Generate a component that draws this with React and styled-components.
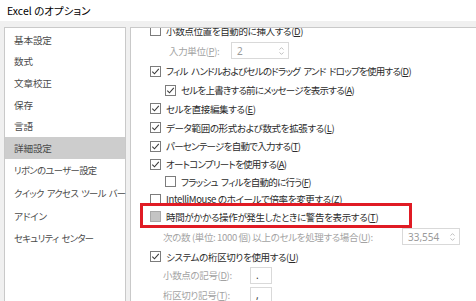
import React from "react";
import styled, { createGlobalStyle } from "styled-components";

const Global = createGlobalStyle`
  html, body { margin: 0; padding: 0; background: #f0f0f0; }
  body { width: 476px; height: 301px; overflow: hidden; font-family: "Noto Sans CJK JP", "Noto Sans", sans-serif; }
`;

const Window = styled.div`
  width: 476px;
  height: 301px;
  display: flex;
  flex-direction: column;
  background: #f0f0f0;
  overflow: hidden;
`;

const TitleBar = styled.div`
  height: 21px;
  flex: none;
  background: #ffffff;
  display: flex;
  align-items: center;
  padding-left: 7px;
  font-size: 10.5px;
  color: #000;
  font-feature-settings: "palt";
`;

const Body = styled.div`
  flex: 1;
  display: flex;
  gap: 4px;
  padding: 6px 0 0 4px;
  min-height: 0;
`;

const Nav = styled.div`
  width: 120px;
  flex: none;
  background: #fff;
  border: 1px solid #c9c9c9;
  border-bottom: none;
  padding-top: 1px;
  display: flex;
  flex-direction: column;
`;

const NavItem = styled.div`
  height: ${(p) => p.$h}px;
  flex: none;
  display: flex;
  align-items: center;
  padding-left: 9px;
  font-size: ${(p) => (p.$tight ? "9.3px" : "9.6px")};
  letter-spacing: ${(p) => (p.$tight ? "-0.6px" : "-0.15px")};
  word-spacing: ${(p) => (p.$tight ? "1.5px" : "0")};
  color: #4a4a4a;
  font-feature-settings: "palt";
  background: ${(p) => (p.$active ? "#cdcdcd" : "transparent")};
  white-space: pre;
`;

const Content = styled.div`
  position: relative;
  flex: 1;
  margin-right: -12px;
  background: #fff;
  border: 1px solid #c9c9c9;
  border-bottom: none;
  overflow: hidden;
`;

const List = styled.div`
  margin-top: -7px;
  display: flex;
  flex-direction: column;
`;

const Row = styled.div`
  height: ${(p) => p.$h}px;
  flex: none;
  display: flex;
  align-items: center;
  padding-left: ${(p) => 19 + (p.$indent || 0)}px;
  font-size: 9.5px;
  letter-spacing: ${(p) => (p.$kana ? "-0.75px" : "-0.35px")};
  word-spacing: ${(p) => (p.$kana ? "2px" : "0")};
  color: ${(p) => (p.$disabled ? "#a3a3a3" : "#2b2b2b")};
  font-feature-settings: "palt";
  white-space: pre;
`;

const Box = styled.span`
  width: 11px;
  height: 11px;
  box-sizing: border-box;
  flex: none;
  border: 1px solid ${(p) => (p.$pressed ? "#a8a8a8" : "#7c7c7c")};
  background: ${(p) => (p.$pressed ? "#c4c4c4" : "#fff")};
  margin-right: 5px;
  display: flex;
  align-items: center;
  justify-content: center;
`;

const U = styled.span`
  text-decoration: underline;
  text-underline-offset: 1px;
`;

const Label = styled.span`
  width: ${(p) => p.$w}px;
  flex: none;
`;

const Field = styled.div`
  width: ${(p) => p.$w}px;
  height: 17px;
  box-sizing: border-box;
  flex: none;
  border: 1px solid #d9d9d9;
  background: #fff;
  display: flex;
  align-items: center;
  padding-left: 5px;
  color: ${(p) => (p.$disabled ? "#9a9a9a" : "#333")};
  font-size: 10px;
  letter-spacing: 0;
  font-family: "Noto Sans", sans-serif;
`;

const Spin = styled.span`
  margin-left: auto;
  margin-right: 4px;
  display: flex;
  flex-direction: column;
  gap: 2px;
`;

const Highlight = styled.div`
  position: absolute;
  left: 9px;
  top: 175px;
  width: 272px;
  height: 25px;
  box-sizing: border-box;
  border: 3px solid #e01b24;
  pointer-events: none;
`;

function CheckBox({ checked, pressed }) {
  return (
    <Box $pressed={pressed}>
      {checked && (
        <svg width="9" height="9" viewBox="0 0 9 9">
          <path d="M1.3 4.6 L3.5 6.8 L7.8 1.9" fill="none" stroke="#3a3a3a" strokeWidth="1.1" />
        </svg>
      )}
    </Box>
  );
}

function SpinArrows() {
  return (
    <Spin>
      <svg width="5" height="3" viewBox="0 0 5 3">
        <path d="M0.5 2.6 L2.5 0.6 L4.5 2.6" fill="none" stroke="#b8b8b8" strokeWidth="0.9" />
      </svg>
      <svg width="5" height="3" viewBox="0 0 5 3">
        <path d="M0.5 0.4 L2.5 2.4 L4.5 0.4" fill="none" stroke="#b8b8b8" strokeWidth="0.9" />
      </svg>
    </Spin>
  );
}

const navItems = [
  ["基本設定", 21.6],
  ["数式", 21.6],
  ["文章校正", 21.6],
  ["保存", 21.6],
  ["言語", 21.6],
  ["詳細設定", 21.6, true],
  ["リボンのユーザー設定", 22.8, false, true],
  ["クイック アクセス ツール バー", 22.8, false, true],
  ["アドイン", 22.8],
  ["セキュリティ センター", 22.8, false, true],
];

export default function App() {
  return (
    <>
      <Global />
      <Window>
        <TitleBar>Excel のオプション</TitleBar>
        <Body>
          <Nav>
            {navItems.map(([t, h, a, k]) => (
              <NavItem key={t} $h={h} $active={a} $tight={k}>
                {t}
              </NavItem>
            ))}
          </Nav>
          <Content>
            <List>
              <Row $h={19}>
                <CheckBox />
                小数点位置を自動的に挿入する(<U>D</U>)
              </Row>
              <Row $h={21} $indent={19} $disabled>
                <Label $w={62}>
                  入力単位(<U>P</U>):
                </Label>
                <Field $w={58} $disabled>
                  2
                  <SpinArrows />
                </Field>
              </Row>
              <Row $h={20} $kana>
                <CheckBox checked />
                フィル ハンドルおよびセルのドラッグ アンド ドロップを使用する(<U>D</U>)
              </Row>
              <Row $h={18} $indent={15} $kana>
                <CheckBox checked />
                セルを上書きする前にメッセージを表示する(<U>A</U>)
              </Row>
              <Row $h={19}>
                <CheckBox checked />
                セルを直接編集する(<U>E</U>)
              </Row>
              <Row $h={19}>
                <CheckBox checked />
                データ範囲の形式および数式を拡張する(<U>L</U>)
              </Row>
              <Row $h={18} $kana>
                <CheckBox checked />
                パーセンテージを自動で入力する(<U>T</U>)
              </Row>
              <Row $h={18} $kana>
                <CheckBox checked />
                オートコンプリートを使用する(<U>A</U>)
              </Row>
              <Row $h={17} $indent={15} $kana>
                <CheckBox />
                フラッシュ フィルを自動的に行う(<U>F</U>)
              </Row>
              <Row $h={18}>
                <CheckBox />
                IntelliMouse のホイールで倍率を変更する(<U>Z</U>)
              </Row>
              <Row $h={17}>
                <CheckBox pressed />
                時間がかかる操作が発生したときに警告を表示する(<U>T</U>)
              </Row>
              <Row $h={23} $indent={13} $disabled>
                <Label $w={239}>
                  次の数 (単位: 1000 個) 以上のセルを処理する場合(<U>U</U>):
                </Label>
                <Field $w={58} $disabled>
                  33,554
                  <SpinArrows />
                </Field>
              </Row>
              <Row $h={17}>
                <CheckBox checked />
                システムの桁区切りを使用する(<U>U</U>)
              </Row>
              <Row $h={20} $indent={13} $disabled>
                <Label $w={87}>
                  小数点の記号(<U>D</U>):
                </Label>
                <Field $w={22}>.</Field>
              </Row>
              <Row $h={20} $indent={13} $disabled>
                <Label $w={87}>
                  桁区切り記号(<U>T</U>):
                </Label>
                <Field $w={22}>,</Field>
              </Row>
            </List>
            <Highlight />
          </Content>
        </Body>
      </Window>
    </>
  );
}
